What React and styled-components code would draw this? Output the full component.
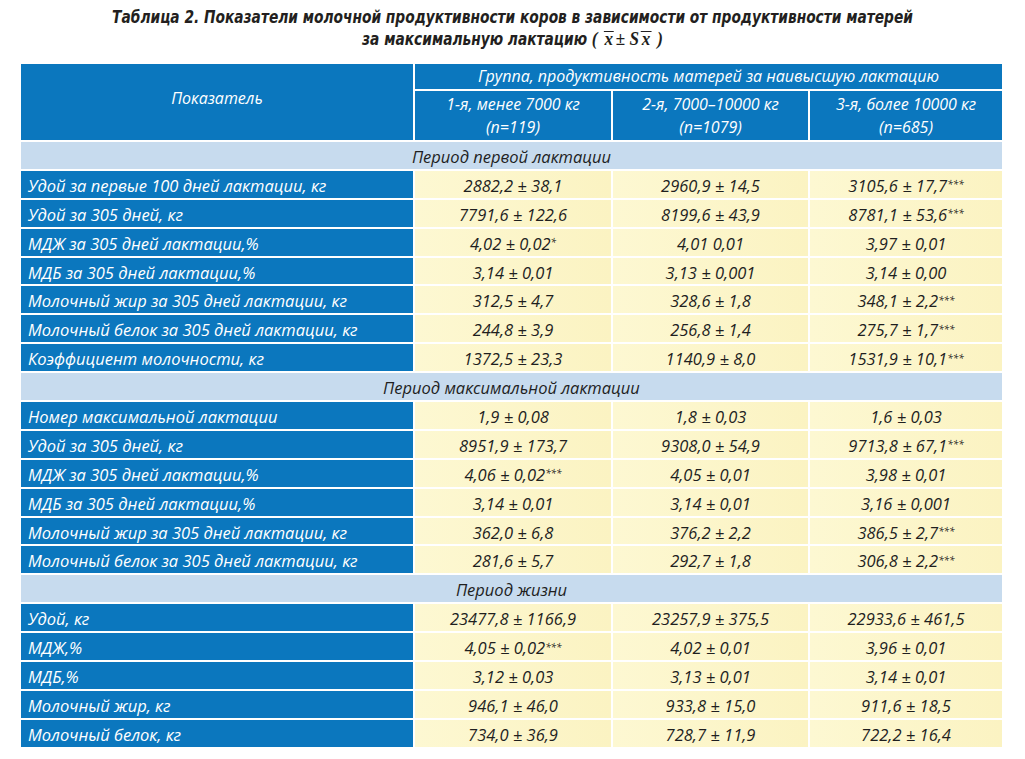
import React from 'react';
import styled, { createGlobalStyle } from 'styled-components';

const GlobalStyle = createGlobalStyle`
  body {
    margin: 0;
    background: #ffffff;
    font-family: 'Open Sans', 'Noto Sans', sans-serif;
  }
`;

const Page = styled.div`
  width: 1025px;
  height: 759px;
  background: #ffffff;
  overflow: hidden;
`;

const Title = styled.div`
  padding-top: 6px;
  height: 64px;
  box-sizing: border-box;
  text-align: center;
  font-family: 'Liberation Sans Narrow', 'DejaVu Sans Condensed', 'Liberation Sans', sans-serif;
  font-stretch: condensed;
  font-weight: bold;
  font-style: italic;
  font-size: 17px;
  line-height: 22px;
  color: #231f20;
`;

const TitleLine = styled.div`
  transform: scaleX(0.9);
`;

const Formula = styled.span`
  font-family: 'Liberation Serif', serif;
  font-weight: bold;
  font-style: italic;
  font-size: 19px;
`;

const Bar = styled.span`
  display: inline-block;
  line-height: 14px;
  border-top: 1.5px solid #231f20;
  padding: 0 1px;
  margin: 0 2px;
`;

const Table = styled.div`
  display: grid;
  grid-template-columns: 392px 196px 195px 192px;
  grid-template-rows: 25px 49px;
  grid-auto-rows: 26.9px;
  column-gap: 2px;
  row-gap: 2px;
  margin-left: 21px;
  width: 981px;
`;

const HeadCell = styled.div`
  background: #0b77be;
  color: #ffffff;
  font-style: italic;
  font-size: 16px;
  line-height: 23px;
  display: flex;
  align-items: center;
  justify-content: center;
  text-align: center;
  grid-column: ${(p) => p.span || 'auto'};
  grid-row: ${(p) => p.rows || 'auto'};
  padding-bottom: ${(p) => p.lift || 0}px;
`;

const SectionRow = styled.div`
  grid-column: 1 / -1;
  background: #c7dbee;
  color: #1f1f1f;
  font-style: italic;
  font-size: 16.5px;
  display: flex;
  align-items: center;
  justify-content: center;
  padding-top: 2px;
`;

const LabelCell = styled.div`
  background: #0b77be;
  color: #ffffff;
  font-style: italic;
  font-size: 16.5px;
  display: flex;
  align-items: center;
  padding-left: 7px;
  padding-top: 2px;
  white-space: nowrap;
`;

const ValueCell = styled.div`
  background: linear-gradient(90deg, #fdf8d2 0%, #fbf3c2 100%);
  color: #1f1f1f;
  font-style: italic;
  font-size: 16.5px;
  display: flex;
  align-items: center;
  justify-content: center;
  padding-top: 2px;
  white-space: nowrap;
`;

const Stars = styled.sup`
  font-size: 10px;
  line-height: 0;
  position: relative;
  top: -1px;
`;

const sections = [
  {
    title: 'Период первой лактации',
    rows: [
      ['Удой за первые 100 дней лактации, кг', '2882,2 ± 38,1', '2960,9 ± 14,5', '3105,6 ± 17,7***'],
      ['Удой за 305 дней, кг', '7791,6 ± 122,6', '8199,6 ± 43,9', '8781,1 ± 53,6***'],
      ['МДЖ за 305 дней лактации,%', '4,02 ± 0,02*', '4,01 0,01', '3,97 ± 0,01'],
      ['МДБ за 305 дней лактации,%', '3,14 ± 0,01', '3,13 ± 0,001', '3,14 ± 0,00'],
      ['Молочный жир за 305 дней лактации, кг', '312,5 ± 4,7', '328,6 ± 1,8', '348,1 ± 2,2***'],
      ['Молочный белок за 305 дней лактации, кг', '244,8 ± 3,9', '256,8 ± 1,4', '275,7 ± 1,7***'],
      ['Коэффициент молочности, кг', '1372,5 ± 23,3', '1140,9 ± 8,0', '1531,9 ± 10,1***'],
    ],
  },
  {
    title: 'Период максимальной лактации',
    rows: [
      ['Номер максимальной лактации', '1,9 ± 0,08', '1,8 ± 0,03', '1,6 ± 0,03'],
      ['Удой за 305 дней, кг', '8951,9 ± 173,7', '9308,0 ± 54,9', '9713,8 ± 67,1***'],
      ['МДЖ за 305 дней лактации,%', '4,06 ± 0,02***', '4,05 ± 0,01', '3,98 ± 0,01'],
      ['МДБ за 305 дней лактации,%', '3,14 ± 0,01', '3,14 ± 0,01', '3,16 ± 0,001'],
      ['Молочный жир за 305 дней лактации, кг', '362,0 ± 6,8', '376,2 ± 2,2', '386,5 ± 2,7***'],
      ['Молочный белок за 305 дней лактации, кг', '281,6 ± 5,7', '292,7 ± 1,8', '306,8 ± 2,2***'],
    ],
  },
  {
    title: 'Период жизни',
    rows: [
      ['Удой, кг', '23477,8 ± 1166,9', '23257,9 ± 375,5', '22933,6 ± 461,5'],
      ['МДЖ,%', '4,05 ± 0,02***', '4,02 ± 0,01', '3,96 ± 0,01'],
      ['МДБ,%', '3,12 ± 0,03', '3,13 ± 0,01', '3,14 ± 0,01'],
      ['Молочный жир, кг', '946,1 ± 46,0', '933,8 ± 15,0', '911,6 ± 18,5'],
      ['Молочный белок, кг', '734,0 ± 36,9', '728,7 ± 11,9', '722,2 ± 16,4'],
    ],
  },
];

function Value({ text }) {
  const m = text.match(/^(.*?)(\*+)$/);
  if (!m) return <ValueCell>{text}</ValueCell>;
  return (
    <ValueCell>
      {m[1]}
      <Stars>{m[2]}</Stars>
    </ValueCell>
  );
}

export default function App() {
  return (
    <Page>
      <GlobalStyle />
      <Title>
        <TitleLine>
          Таблица 2. Показатели молочной продуктивности коров в зависимости от продуктивности матерей
        </TitleLine>
        <TitleLine>
          за максимальную лактацию{' '}
          <Formula>
            ( <Bar>x</Bar>± S<Bar>x</Bar> )
          </Formula>
        </TitleLine>
      </Title>
      <Table>
        <HeadCell rows="1 / 3" lift={8}>Показатель</HeadCell>
        <HeadCell span="2 / 5">Группа, продуктивность матерей за наивысшую лактацию</HeadCell>
        <HeadCell>1-я, менее 7000 кг<br />(n=119)</HeadCell>
        <HeadCell>2-я, 7000–10000 кг<br />(n=1079)</HeadCell>
        <HeadCell>3-я, более 10000 кг<br />(n=685)</HeadCell>
        {sections.map((s) => (
          <React.Fragment key={s.title}>
            <SectionRow>{s.title}</SectionRow>
            {s.rows.map((r, i) => (
              <React.Fragment key={s.title + i}>
                <LabelCell>{r[0]}</LabelCell>
                <Value text={r[1]} />
                <Value text={r[2]} />
                <Value text={r[3]} />
              </React.Fragment>
            ))}
          </React.Fragment>
        ))}
      </Table>
    </Page>
  );
}
